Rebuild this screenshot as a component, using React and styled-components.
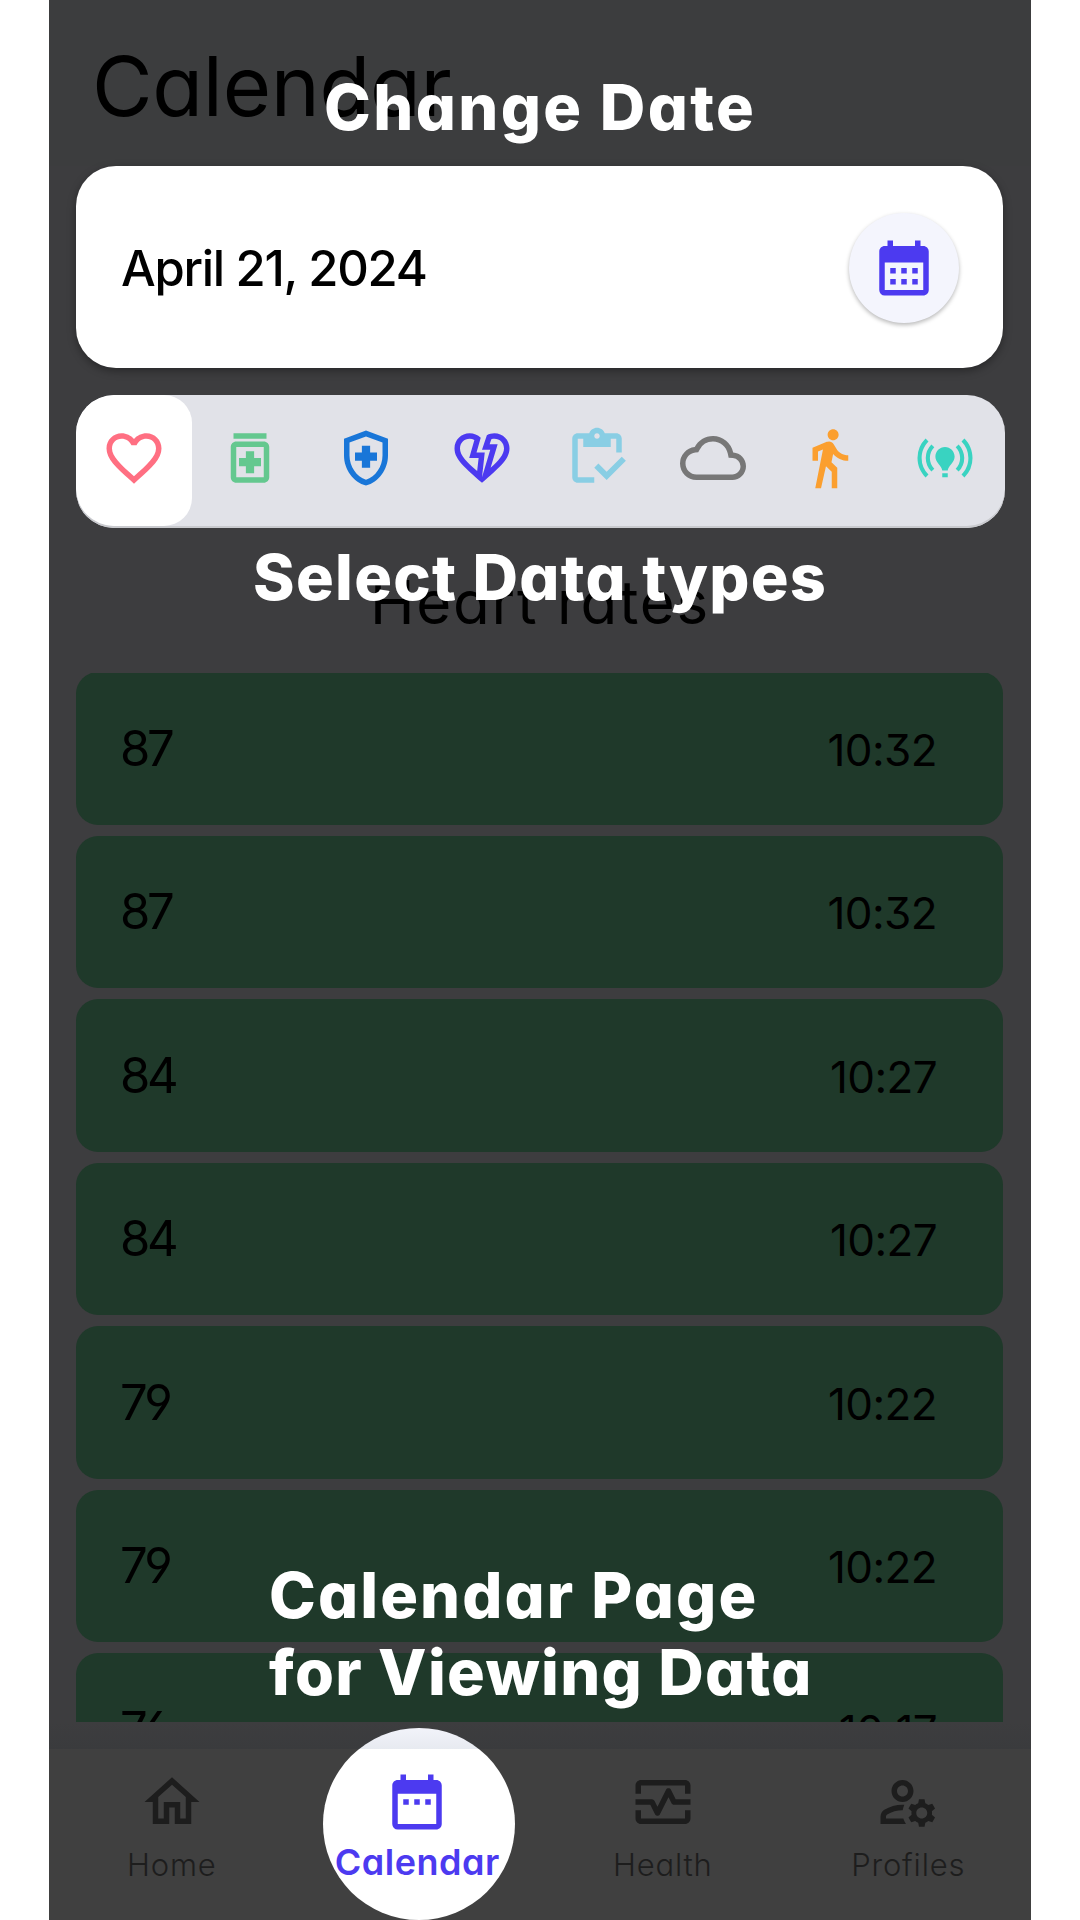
import React from 'react';
import styled, { createGlobalStyle, css } from 'styled-components';
import {
  MdFavoriteBorder,
  MdOutlineMedication,
  MdOutlineHealthAndSafety,
  MdOutlineHeartBroken,
  MdOutlineInventory,
  MdOutlineCloud,
  MdDirectionsWalk,
  MdOnlinePrediction,
  MdOutlineHome,
  MdDateRange,
  MdCalendarMonth,
  MdOutlineMonitorHeart,
  MdOutlineManageAccounts,
} from 'react-icons/md';

const GlobalStyle = createGlobalStyle`
  * { box-sizing: border-box; }
  body { margin: 0; background: #fff; }
`;

const Page = styled.div`
  display: flex;
  justify-content: center;
  width: 1080px;
  height: 1920px;
  background: #fff;
  font-family: Inter, "Liberation Sans", sans-serif;
  font-feature-settings: "cv11" 1, "cv03" 1, "cv04" 1, "cv09" 1;
`;

const Phone = styled.main`
  position: relative;
  display: flex;
  flex-direction: column;
  width: 982px;
  height: 1920px;
  overflow: hidden;
  background: #3d3d3f;
  color: #000;
`;

const Header = styled.header`
  height: 166px;
  flex: none;
  padding: 36px 0 0 43px;
  background: #3c3d3e;
`;

const Title = styled.h1`
  margin: 0;
  font-size: 83px;
  font-weight: 440;
  line-height: 100px;
  letter-spacing: -0.3px;
`;

const DateCard = styled.section`
  display: flex;
  align-items: center;
  justify-content: space-between;
  flex: none;
  height: 202px;
  margin: 0 28px 0 27px;
  padding: 1px 44px 0 45px;
  border-radius: 40px;
  background: #fff;
  box-shadow: 0 3px 8px rgba(0, 0, 0, 0.35);
`;

const DateText = styled.span`
  padding-top: 3px;
  font-size: 49px;
  font-weight: 500;
  letter-spacing: -1.3px;
  line-height: 60px;
  white-space: nowrap;
`;

const RoundButton = styled.button`
  display: grid;
  place-items: center;
  width: 110px;
  height: 110px;
  padding: 0;
  border: 0;
  border-radius: 50%;
  background: #f4f5fd;
  color: #4c3af0;
  box-shadow: 0 2px 4px rgba(0, 0, 0, 0.28);
`;

const TypeTabs = styled.div`
  display: flex;
  flex: none;
  height: 133px;
  margin: 27px 26px 0 27px;
  padding-right: 2px;
  border-radius: 38px;
  background: #e1e2e8;
  box-shadow: inset 0 -2px 0 #c9cace;
  overflow: hidden;
`;

const TypeTab = styled.button`
  display: grid;
  place-items: center;
  flex: 1;
  height: 131px;
  padding: 0 0 6px;
  border: 0;
  background: transparent;
  color: ${(p) => p.$tint};
  ${(p) =>
    p.$selected &&
    css`
      background: #fff;
      border-radius: 38px 28px 28px 38px;
    `}
`;

const SectionTitle = styled.h2`
  flex: none;
  margin: 38px 0 0;
  font-size: 60px;
  font-weight: 400;
  line-height: 72px;
  letter-spacing: 1.8px;
  text-align: center;
`;

const Readings = styled.ul`
  display: flex;
  flex-direction: column;
  gap: 11px;
  flex: none;
  height: 1049px;
  margin: 35px 28px 0 27px;
  padding: 0;
  overflow: hidden;
  list-style: none;
`;

const Reading = styled.li`
  display: flex;
  align-items: center;
  justify-content: space-between;
  flex: none;
  height: 152.5px;
  padding: 0 66px 0 44px;
  border-radius: 22px;
  background: #1f392a;

  &:first-child {
    margin-top: -1px;
  }
`;

const ReadingValue = styled.span`
  padding-top: 1px;
  font-size: 49px;
  line-height: 60px;
  letter-spacing: -3.4px;
`;

const ReadingTime = styled.time`
  padding-top: 3px;
  font-size: 44px;
  line-height: 60px;
  letter-spacing: -0.6px;
`;

const NavShade = styled.div`
  flex: 1;
  background: linear-gradient(#3d3d3f, #3a3b3d);
`;

const NavBar = styled.nav`
  display: flex;
  flex: none;
  height: 171px;
  background: #404040;
`;

const NavItem = styled.a`
  position: relative;
  z-index: 0;
  display: flex;
  flex-direction: column;
  align-items: center;
  flex: 1;
  padding-top: 20px;
  color: ${(p) => (p.$active ? '#4c3af0' : '#1d1d1d')};
  ${(p) =>
    p.$active &&
    css`
      &::before {
        content: '';
        position: absolute;
        z-index: -1;
        top: -21px;
        left: 28px;
        width: 192px;
        height: 192px;
        border-radius: 50%;
        background: linear-gradient(#f2f3fa, #e7eaf0 21px, #fff 21px);
      }
    `}
`;

const NavLabel = styled.span`
  margin-top: 10px;
  font-size: ${(p) => (p.$active ? 36 : 31)}px;
  font-weight: ${(p) => (p.$active ? 600 : 300)};
  line-height: ${(p) => (p.$active ? 34 : 40)}px;
  letter-spacing: ${(p) => (p.$active ? 0.5 : 0.8)}px;
`;

const Callout = styled.p`
  position: absolute;
  top: ${(p) => p.$top}px;
  left: ${(p) => p.$left}px;
  margin: 0;
  color: #fff;
  font-size: 63px;
  font-weight: 800;
  line-height: 77px;
  white-space: nowrap;
`;

const CalloutLine = styled.span`
  display: block;
  width: max-content;
  letter-spacing: ${(p) => p.$spacing}px;
`;

const ICON = 66;

const types = [
  { icon: MdFavoriteBorder, tint: '#ff6f82' },
  { icon: MdOutlineMedication, tint: '#64c88f' },
  { icon: MdOutlineHealthAndSafety, tint: '#1976d8' },
  { icon: MdOutlineHeartBroken, tint: '#4c3af0' },
  { icon: MdOutlineInventory, tint: '#89cee4' },
  { icon: MdOutlineCloud, tint: '#777777' },
  { icon: MdDirectionsWalk, tint: '#fb9f2f' },
  { icon: MdOnlinePrediction, tint: '#39d3c1' },
];

const readings = [
  ['87', '10:32'],
  ['87', '10:32'],
  ['84', '10:27'],
  ['84', '10:27'],
  ['79', '10:22'],
  ['79', '10:22'],
  ['76', '10:17'],
];

const tabs = [
  { label: 'Home', icon: MdOutlineHome },
  { label: 'Calendar', icon: MdDateRange, active: true },
  { label: 'Health', icon: MdOutlineMonitorHeart },
  { label: 'Profiles', icon: MdOutlineManageAccounts },
];

export default function App() {
  return (
    <Page>
      <GlobalStyle />
      <Phone>
        <Header>
          <Title>Calendar</Title>
        </Header>
        <DateCard>
          <DateText>April 21, 2024</DateText>
          <RoundButton aria-label="Pick a date">
            <MdCalendarMonth size={ICON} />
          </RoundButton>
        </DateCard>
        <TypeTabs>
          {types.map(({ icon: Icon, tint }, i) => (
            <TypeTab key={tint} $tint={tint} $selected={i === 0}>
              <Icon size={ICON} />
            </TypeTab>
          ))}
        </TypeTabs>
        <SectionTitle>Heart rates</SectionTitle>
        <Readings>
          {readings.map(([value, time], i) => (
            <Reading key={i}>
              <ReadingValue>{value}</ReadingValue>
              <ReadingTime>{time}</ReadingTime>
            </Reading>
          ))}
        </Readings>
        <NavShade />
        <NavBar>
          {tabs.map(({ label, icon: Icon, active }) => (
            <NavItem key={label} $active={active}>
              <Icon size={ICON} />
              <NavLabel $active={active}>{label}</NavLabel>
            </NavItem>
          ))}
        </NavBar>
        <Callout $top={69} $left={275}>
          <CalloutLine $spacing={2.4}>Change Date</CalloutLine>
        </Callout>
        <Callout $top={539} $left={204}>
          <CalloutLine $spacing={1.3}>Select Data types</CalloutLine>
        </Callout>
        <Callout $top={1557} $left={220}>
          <CalloutLine $spacing={2.1}>Calendar Page</CalloutLine>
          <CalloutLine $spacing={1.3}>for Viewing Data</CalloutLine>
        </Callout>
      </Phone>
    </Page>
  );
}
